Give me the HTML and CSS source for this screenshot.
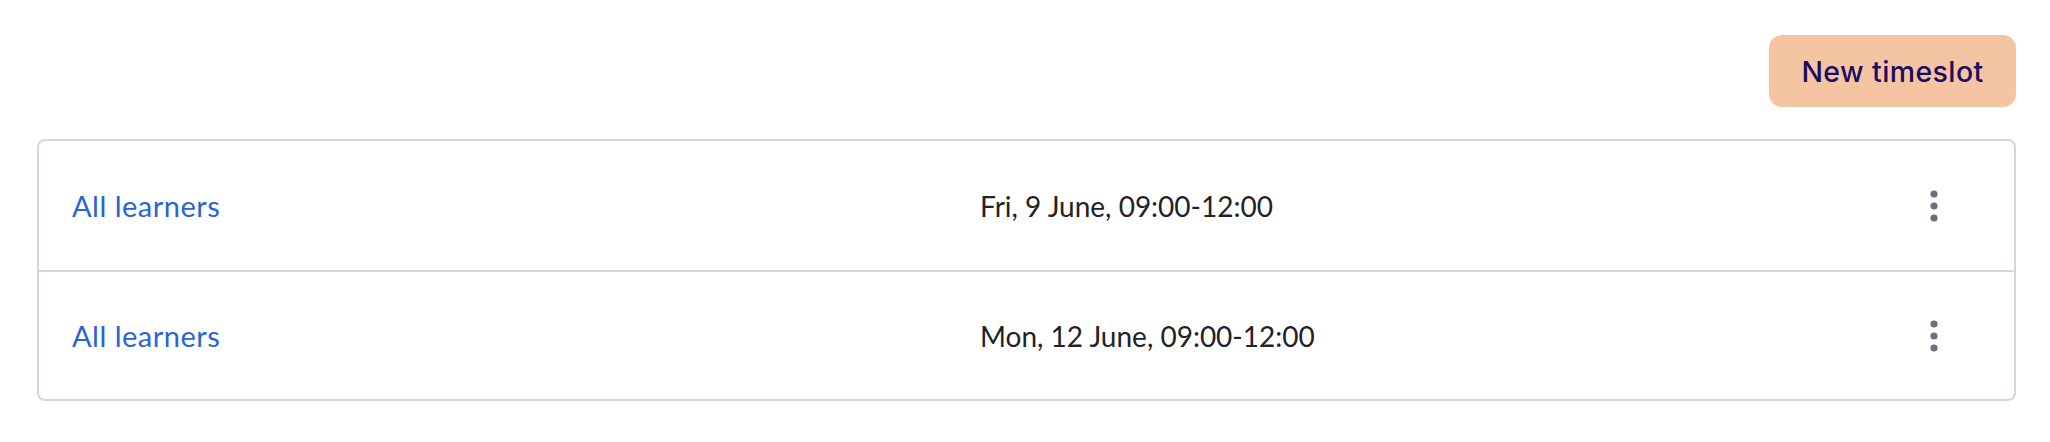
FILE: index.html
```html
<!DOCTYPE html>
<html lang="en">
<head>
<meta charset="utf-8">
<title>Timeslots</title>
<link rel="stylesheet" href="styles.css">
</head>
<body>
<main class="page">
  <div class="toolbar">
    <button class="btn-primary" type="button">New timeslot</button>
  </div>
  <div class="slot-list">
    <div class="slot-row">
      <a class="slot-audience" href="#">All learners</a>
      <span class="slot-time">Fri, 9 June, 09:00-12:00</span>
      <button class="kebab" type="button" aria-label="More actions">
        <svg width="8" height="32" viewBox="0 0 8 32"><circle cx="4" cy="4" r="3.6"/><circle cx="4" cy="16" r="3.6"/><circle cx="4" cy="28" r="3.6"/></svg>
      </button>
    </div>
    <div class="slot-row">
      <a class="slot-audience" href="#">All learners</a>
      <span class="slot-time">Mon, 12 June, 09:00-12:00</span>
      <button class="kebab" type="button" aria-label="More actions">
        <svg width="8" height="32" viewBox="0 0 8 32"><circle cx="4" cy="4" r="3.6"/><circle cx="4" cy="16" r="3.6"/><circle cx="4" cy="28" r="3.6"/></svg>
      </button>
    </div>
  </div>
</main>
</body>
</html>
```

FILE: styles.css
```css
* { box-sizing: border-box; }

html, body {
  margin: 0;
  background: #ffffff;
}

.page {
  padding: 35px 34px 0 37px;
  font-family: "Lato", "Noto Sans", sans-serif;
}

.toolbar {
  display: flex;
  justify-content: flex-end;
  margin-bottom: 32px;
}

.btn-primary {
  width: 247px;
  height: 72px;
  border: 0;
  border-radius: 13px;
  background: #f5c4a3;
  color: #1b0d5f;
  font-family: "Inter", "Noto Sans", sans-serif;
  font-weight: 500;
  font-size: 28.5px;
  letter-spacing: 0.4px;
  cursor: pointer;
}

.slot-list {
  border: 2px solid #d3d6db;
  border-radius: 8px;
}

.slot-row {
  display: grid;
  grid-template-columns: 908px 1fr 40px;
  align-items: center;
  height: 129px;
  padding: 0 60px 0 33px;
}

.slot-row + .slot-row {
  border-top: 2px solid #d3d6db;
}

.slot-audience {
  color: #2a63d8;
  text-decoration: none;
  font-size: 29px;
  letter-spacing: 0.5px;
}

.slot-time {
  color: #1f2328;
  font-size: 28px;
}

.kebab {
  display: flex;
  justify-content: center;
  align-items: center;
  padding: 0;
  border: 0;
  background: none;
  height: 40px;
  cursor: pointer;
}

.kebab svg { fill: #6b7079; }
```
